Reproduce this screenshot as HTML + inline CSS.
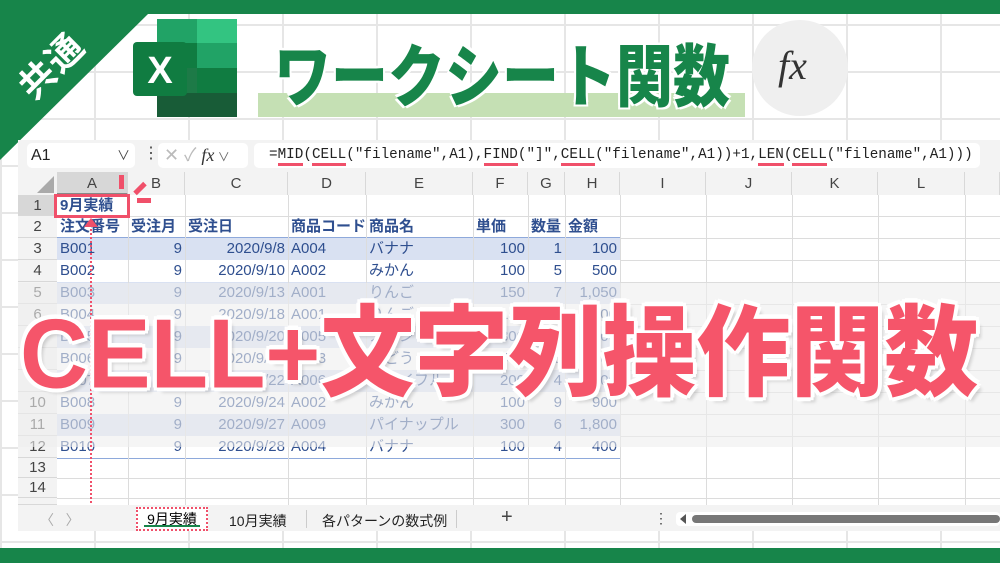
<!DOCTYPE html>
<html><head><meta charset="utf-8"><style>
*{margin:0;padding:0;box-sizing:border-box}
body{width:1000px;height:563px;overflow:hidden;position:relative;background:#fff;font-family:"Liberation Sans","Noto Sans CJK JP",sans-serif}
.abs{position:absolute}
.grid{position:absolute;left:0;top:0;width:1000px;height:563px;
background-image:linear-gradient(#e6e6e6 2px,transparent 2px),linear-gradient(90deg,#e6e6e6 2px,transparent 2px);
background-size:94px 47px;background-position:0 24px}
.win{position:absolute;left:18px;top:140px;width:982px;height:391px;background:#f3f3f3}
.sheet{position:absolute;left:0;top:0;font-size:15px;color:#2f4f8f}
.cell{position:absolute;height:22px;line-height:22px;white-space:nowrap;padding:0 3px}
.r{text-align:right}
.vl{position:absolute;width:1px;background:#dcdcdc}
.hl{position:absolute;height:1px;background:#dcdcdc}
.ch{position:absolute;top:172px;height:23px;line-height:23px;text-align:center;color:#444;font-size:15px;background:#f3f3f3;border-right:1px solid #d8d8d8}
.rh{position:absolute;left:18px;width:39px;text-align:center;color:#444;font-size:15px;background:#f3f3f3;border-bottom:1px solid #d8d8d8}
.u{border-bottom:3px solid #f0506a}
</style></head><body>
<div class="grid"></div>
<div class="abs" style="left:0;top:0;width:1000px;height:14px;background:#17854a"></div>
<div class="abs" style="left:0;top:548px;width:1000px;height:15px;background:#17854a"></div>
<svg class="abs" style="left:0;top:0" width="160" height="165"><polygon points="0,0 148,0 148,14 0,160" fill="#17854a"/></svg>
<div class="abs" style="left:12px;top:38px;color:#fff;font-weight:bold;font-size:36px;transform:rotate(-45deg);letter-spacing:2px">共通</div>
<svg class="abs" style="left:133px;top:19px" width="106" height="100" viewBox="0 0 106 100">
<rect x="24" y="0" width="80" height="98" rx="5" fill="#1d7a47"/>
<rect x="64" y="0" width="40" height="24" fill="#33c481"/>
<rect x="24" y="0" width="40" height="24" fill="#21a366"/>
<rect x="64" y="24" width="40" height="25" fill="#21a366"/>
<rect x="24" y="24" width="40" height="25" fill="#107c41"/>
<rect x="64" y="49" width="40" height="25" fill="#107c41"/>
<rect x="24" y="74" width="80" height="24" fill="#185c37"/>
<rect x="0" y="23" width="54" height="54" rx="4" fill="#107c41"/>
<text x="27" y="64" font-size="38" font-weight="bold" fill="#fff" text-anchor="middle" font-family="Liberation Sans">X</text>
</svg>
<div class="abs" style="left:258px;top:93px;width:487px;height:24px;background:#c5e0b4"></div>
<div class="abs" style="left:274px;top:30px;font-size:57px;font-weight:900;color:#17854a;line-height:80px;white-space:nowrap;transform:scaleY(1.2);transform-origin:left top;text-shadow:2px 2px 0 #fff,-2px -2px 0 #fff,2px -2px 0 #fff,-2px 2px 0 #fff">ワークシート関数</div>
<div class="abs" style="left:752px;top:20px;width:96px;height:96px;border-radius:50%;background:#efefef"></div>
<div class="abs" style="left:778px;top:42px;font-family:'Liberation Serif',serif;font-style:italic;font-size:40px;color:#333">fx</div>

<div class="win"></div>
<div class="abs" style="left:27px;top:143px;width:108px;height:25px;background:#fff;border-radius:5px;font-size:16px;line-height:25px;padding-left:4px;color:#222">A1<span style="position:absolute;right:5px;color:#444;font-size:13px">∨</span></div>
<div class="abs" style="left:143px;top:143px;font-size:16px;color:#444">⋮</div>
<div class="abs" style="left:158px;top:143px;width:90px;height:25px;background:#fff;border-radius:5px;font-size:18px;line-height:25px;color:#bbb;padding-left:6px">✕ ✓ <i style="font-family:'Liberation Serif';color:#333">fx</i><span style="font-size:12px;color:#666"> ∨</span></div>
<div class="abs" style="left:254px;top:143px;width:726px;height:25px;background:#fff;border-radius:5px;font-family:'Liberation Mono',monospace;font-size:14.3px;line-height:25px;color:#222;padding-left:15px;white-space:nowrap;overflow:hidden">=<span class="u">MID</span>(<span class="u">CELL</span>("filename",A1),<span class="u">FIND</span>("]",<span class="u">CELL</span>("filename",A1))+1,<span class="u">LEN</span>(<span class="u">CELL</span>("filename",A1)))</div>

<div class="abs" style="left:57px;top:195px;width:943px;height:310px;background:#fff"></div>
<div class="abs" style="left:18px;top:172px;width:39px;height:23px;background:#f3f3f3"></div>
<svg class="abs" style="left:36px;top:176px" width="20" height="18"><polygon points="18,0 18,17 1,17" fill="#aaa"/></svg>
<div class="ch" style="left:57px;width:71px;background:#d7d7d7;border-bottom:2px solid #888">A</div>
<div class="ch" style="left:128px;width:57px">B</div>
<div class="ch" style="left:185px;width:103px">C</div>
<div class="ch" style="left:288px;width:78px">D</div>
<div class="ch" style="left:366px;width:107px">E</div>
<div class="ch" style="left:473px;width:55px">F</div>
<div class="ch" style="left:528px;width:37px">G</div>
<div class="ch" style="left:565px;width:55px">H</div>
<div class="ch" style="left:620px;width:86px">I</div>
<div class="ch" style="left:706px;width:86px">J</div>
<div class="ch" style="left:792px;width:86px">K</div>
<div class="ch" style="left:878px;width:87px">L</div>
<div class="ch" style="left:965px;width:35px"></div>
<div class="abs" style="left:57px;top:238px;width:563px;height:22px;background:#d9e1f2"></div>
<div class="abs" style="left:57px;top:282px;width:563px;height:22px;background:#d9e1f2"></div>
<div class="abs" style="left:57px;top:326px;width:563px;height:22px;background:#d9e1f2"></div>
<div class="abs" style="left:57px;top:370px;width:563px;height:22px;background:#d9e1f2"></div>
<div class="abs" style="left:57px;top:414px;width:563px;height:22px;background:#d9e1f2"></div>
<div class="abs" style="left:57px;top:237px;width:563px;height:1px;background:#8ea9db"></div>
<div class="abs" style="left:57px;top:458px;width:563px;height:1px;background:#8ea9db"></div>
<div class="vl" style="left:128px;top:195px;height:310px"></div>
<div class="vl" style="left:185px;top:195px;height:310px"></div>
<div class="vl" style="left:288px;top:195px;height:310px"></div>
<div class="vl" style="left:366px;top:195px;height:310px"></div>
<div class="vl" style="left:473px;top:195px;height:310px"></div>
<div class="vl" style="left:528px;top:195px;height:310px"></div>
<div class="vl" style="left:565px;top:195px;height:310px"></div>
<div class="vl" style="left:620px;top:195px;height:310px"></div>
<div class="vl" style="left:706px;top:195px;height:310px"></div>
<div class="vl" style="left:792px;top:195px;height:310px"></div>
<div class="vl" style="left:878px;top:195px;height:310px"></div>
<div class="vl" style="left:965px;top:195px;height:310px"></div>
<div class="hl" style="left:57px;top:216px;width:943px"></div>
<div class="hl" style="left:620px;top:238px;width:380px"></div>
<div class="hl" style="left:620px;top:260px;width:380px"></div>
<div class="hl" style="left:620px;top:282px;width:380px"></div>
<div class="hl" style="left:620px;top:304px;width:380px"></div>
<div class="hl" style="left:620px;top:326px;width:380px"></div>
<div class="hl" style="left:620px;top:348px;width:380px"></div>
<div class="hl" style="left:620px;top:370px;width:380px"></div>
<div class="hl" style="left:620px;top:392px;width:380px"></div>
<div class="hl" style="left:620px;top:414px;width:380px"></div>
<div class="hl" style="left:620px;top:436px;width:380px"></div>
<div class="hl" style="left:57px;top:478px;width:943px"></div>
<div class="hl" style="left:57px;top:498px;width:943px"></div>
<div class="rh" style="top:195px;height:21px;line-height:21px;background:#d7d7d7">1</div>
<div class="rh" style="top:216px;height:22px;line-height:22px">2</div>
<div class="rh" style="top:238px;height:22px;line-height:22px">3</div>
<div class="rh" style="top:260px;height:22px;line-height:22px">4</div>
<div class="rh" style="top:282px;height:22px;line-height:22px">5</div>
<div class="rh" style="top:304px;height:22px;line-height:22px">6</div>
<div class="rh" style="top:326px;height:22px;line-height:22px">7</div>
<div class="rh" style="top:348px;height:22px;line-height:22px">8</div>
<div class="rh" style="top:370px;height:22px;line-height:22px">9</div>
<div class="rh" style="top:392px;height:22px;line-height:22px">10</div>
<div class="rh" style="top:414px;height:22px;line-height:22px">11</div>
<div class="rh" style="top:436px;height:22px;line-height:22px">12</div>
<div class="rh" style="top:458px;height:20px;line-height:20px">13</div>
<div class="rh" style="top:478px;height:20px;line-height:20px">14</div>
<div class="rh" style="top:498px;height:7px"></div>

<div class="sheet">
<div class="cell" style="left:57px;top:195px;font-weight:bold">9月実績</div>
<div class="cell" style="left:57px;top:216px;font-weight:bold">注文番号</div><div class="cell" style="left:128px;top:216px;font-weight:bold">受注月</div><div class="cell" style="left:185px;top:216px;font-weight:bold">受注日</div><div class="cell" style="left:288px;top:216px;font-weight:bold">商品コード</div><div class="cell" style="left:366px;top:216px;font-weight:bold">商品名</div><div class="cell" style="left:473px;top:216px;font-weight:bold">単価</div><div class="cell" style="left:528px;top:216px;font-weight:bold">数量</div><div class="cell" style="left:565px;top:216px;font-weight:bold">金額</div>
<div class="cell" style="left:57px;top:238px">B001</div><div class="cell r" style="left:128px;top:238px;width:57px">9</div><div class="cell r" style="left:185px;top:238px;width:103px">2020/9/8</div><div class="cell" style="left:288px;top:238px">A004</div><div class="cell" style="left:366px;top:238px">バナナ</div><div class="cell r" style="left:473px;top:238px;width:55px">100</div><div class="cell r" style="left:528px;top:238px;width:37px">1</div><div class="cell r" style="left:565px;top:238px;width:55px">100</div>
<div class="cell" style="left:57px;top:260px">B002</div><div class="cell r" style="left:128px;top:260px;width:57px">9</div><div class="cell r" style="left:185px;top:260px;width:103px">2020/9/10</div><div class="cell" style="left:288px;top:260px">A002</div><div class="cell" style="left:366px;top:260px">みかん</div><div class="cell r" style="left:473px;top:260px;width:55px">100</div><div class="cell r" style="left:528px;top:260px;width:37px">5</div><div class="cell r" style="left:565px;top:260px;width:55px">500</div>
<div class="cell" style="left:57px;top:282px">B003</div><div class="cell r" style="left:128px;top:282px;width:57px">9</div><div class="cell r" style="left:185px;top:282px;width:103px">2020/9/13</div><div class="cell" style="left:288px;top:282px">A001</div><div class="cell" style="left:366px;top:282px">りんご</div><div class="cell r" style="left:473px;top:282px;width:55px">150</div><div class="cell r" style="left:528px;top:282px;width:37px">7</div><div class="cell r" style="left:565px;top:282px;width:55px">1,050</div>
<div class="cell" style="left:57px;top:304px">B004</div><div class="cell r" style="left:128px;top:304px;width:57px">9</div><div class="cell r" style="left:185px;top:304px;width:103px">2020/9/18</div><div class="cell" style="left:288px;top:304px">A001</div><div class="cell" style="left:366px;top:304px">りんご</div><div class="cell r" style="left:473px;top:304px;width:55px">150</div><div class="cell r" style="left:528px;top:304px;width:37px">8</div><div class="cell r" style="left:565px;top:304px;width:55px">1,200</div>
<div class="cell" style="left:57px;top:326px">B005</div><div class="cell r" style="left:128px;top:326px;width:57px">9</div><div class="cell r" style="left:185px;top:326px;width:103px">2020/9/20</div><div class="cell" style="left:288px;top:326px">A005</div><div class="cell" style="left:366px;top:326px">メロン</div><div class="cell r" style="left:473px;top:326px;width:55px">800</div><div class="cell r" style="left:528px;top:326px;width:37px">2</div><div class="cell r" style="left:565px;top:326px;width:55px">1,600</div>
<div class="cell" style="left:57px;top:348px">B006</div><div class="cell r" style="left:128px;top:348px;width:57px">9</div><div class="cell r" style="left:185px;top:348px;width:103px">2020/9/21</div><div class="cell" style="left:288px;top:348px">A003</div><div class="cell" style="left:366px;top:348px">ぶどう</div><div class="cell r" style="left:473px;top:348px;width:55px">500</div><div class="cell r" style="left:528px;top:348px;width:37px">3</div><div class="cell r" style="left:565px;top:348px;width:55px">1,500</div>
<div class="cell" style="left:57px;top:370px">B007</div><div class="cell r" style="left:128px;top:370px;width:57px">9</div><div class="cell r" style="left:185px;top:370px;width:103px">2020/9/22</div><div class="cell" style="left:288px;top:370px">A006</div><div class="cell" style="left:366px;top:370px">キウイフルーツ</div><div class="cell r" style="left:473px;top:370px;width:55px">200</div><div class="cell r" style="left:528px;top:370px;width:37px">4</div><div class="cell r" style="left:565px;top:370px;width:55px">800</div>
<div class="cell" style="left:57px;top:392px">B008</div><div class="cell r" style="left:128px;top:392px;width:57px">9</div><div class="cell r" style="left:185px;top:392px;width:103px">2020/9/24</div><div class="cell" style="left:288px;top:392px">A002</div><div class="cell" style="left:366px;top:392px">みかん</div><div class="cell r" style="left:473px;top:392px;width:55px">100</div><div class="cell r" style="left:528px;top:392px;width:37px">9</div><div class="cell r" style="left:565px;top:392px;width:55px">900</div>
<div class="cell" style="left:57px;top:414px">B009</div><div class="cell r" style="left:128px;top:414px;width:57px">9</div><div class="cell r" style="left:185px;top:414px;width:103px">2020/9/27</div><div class="cell" style="left:288px;top:414px">A009</div><div class="cell" style="left:366px;top:414px">パイナップル</div><div class="cell r" style="left:473px;top:414px;width:55px">300</div><div class="cell r" style="left:528px;top:414px;width:37px">6</div><div class="cell r" style="left:565px;top:414px;width:55px">1,800</div>
<div class="cell" style="left:57px;top:436px">B010</div><div class="cell r" style="left:128px;top:436px;width:57px">9</div><div class="cell r" style="left:185px;top:436px;width:103px">2020/9/28</div><div class="cell" style="left:288px;top:436px">A004</div><div class="cell" style="left:366px;top:436px">バナナ</div><div class="cell r" style="left:473px;top:436px;width:55px">100</div><div class="cell r" style="left:528px;top:436px;width:37px">4</div><div class="cell r" style="left:565px;top:436px;width:55px">400</div>
</div>
<div class="abs" style="left:18px;top:283px;width:982px;height:164px;background:rgba(238,238,238,0.6)"></div>
<div class="abs" style="left:54px;top:194px;width:76px;height:24px;border:3px solid #f0506a"></div>
<div class="abs" style="left:119px;top:175px;width:5px;height:14px;background:#f0506a"></div>
<div class="abs" style="left:133px;top:186px;width:14px;height:5px;background:#f0506a;transform:rotate(-45deg)"></div>
<div class="abs" style="left:137px;top:198px;width:14px;height:5px;background:#f0506a"></div>
<div class="abs" style="left:90px;top:222px;width:0;height:296px;border-left:2px dotted #f0506a"></div>
<div class="abs" style="left:90px;top:517px;width:46px;height:0;border-top:2px dotted #f0506a"></div>
<svg class="abs" style="left:84px;top:218px" width="14" height="10"><polygon points="7,0 14,9 0,9" fill="#f0506a"/></svg>
<div class="abs" style="left:18px;top:505px;width:982px;height:26px;background:#f3f3f3"></div>
<div class="abs" style="left:40px;top:510px;color:#aaa;font-size:14px">〈 &nbsp; 〉</div>
<div class="abs" style="left:136px;top:507px;width:72px;height:24px;border:2px dotted #f0506a;background:#fff;font-size:14px;text-align:center;line-height:20px">9月実績<div style="position:absolute;left:6px;right:6px;bottom:2px;height:2px;background:#17854a"></div></div>
<div class="abs" style="left:229px;top:511px;font-size:14px;color:#222">10月実績</div>
<div class="abs" style="left:306px;top:510px;width:1px;height:18px;background:#ccc"></div>
<div class="abs" style="left:322px;top:511px;font-size:14px;color:#222">各パターンの数式例</div>
<div class="abs" style="left:456px;top:510px;width:1px;height:18px;background:#ccc"></div>
<div class="abs" style="left:501px;top:506px;font-size:20px;color:#444">+</div>
<div class="abs" style="left:654px;top:510px;font-size:14px;color:#444">⋮</div>
<div class="abs" style="left:676px;top:512px;width:324px;height:14px;background:#fff;border-radius:4px"></div>
<div class="abs" style="left:692px;top:515px;width:308px;height:8px;background:#777;border-radius:4px"></div>
<svg class="abs" style="left:680px;top:514px" width="8" height="10"><polygon points="6,0 6,10 0,5" fill="#555"/></svg>
<div class="abs" style="left:20px;top:296px;font-size:94px;font-weight:900;color:#f5556a;white-space:nowrap;line-height:110px;transform:scaleY(1.05);transform-origin:left top;text-shadow:3px 3px 0 #fff,-3px -3px 0 #fff,3px -3px 0 #fff,-3px 3px 0 #fff,0 4px 0 #fff,4px 0 0 #fff,0 -4px 0 #fff,-4px 0 0 #fff,5px 5px 3px rgba(0,0,0,.15)">CELL+文字列操作関数</div>
</body></html>
